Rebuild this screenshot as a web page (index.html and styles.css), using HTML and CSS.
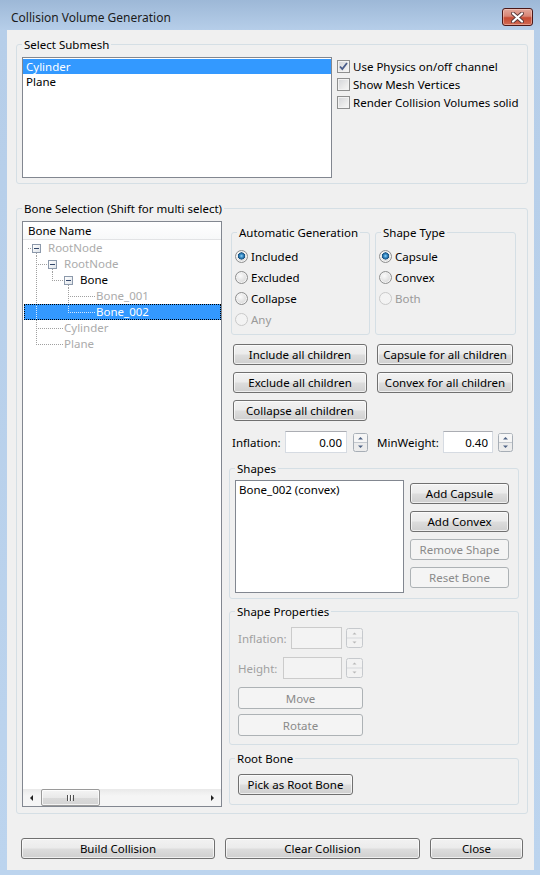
FILE: index.html
```html
<!DOCTYPE html>
<html lang="en">
<head>
  <meta charset="UTF-8">
  <title>Collision Volume Generation</title>
  <link rel="stylesheet" href="styles.css">
</head>
<body>
  <div class="window">
    <div class="titlebar">
      <span class="title">Collision Volume Generation</span>
      <button class="close-btn" aria-label="Close">
        <svg width="13" height="11" viewBox="0 0 13 11">
          <path d="M2 1.5 L11 9.5 M11 1.5 L2 9.5" stroke="#5a3a3a" stroke-width="4" stroke-linecap="round"/>
          <path d="M2 1.5 L11 9.5 M11 1.5 L2 9.5" stroke="#fff" stroke-width="2.2" stroke-linecap="round"/>
        </svg>
      </button>
    </div>

    <div class="client">
      <!-- submesh list + display options -->
      <fieldset class="group submesh">
        <legend>Select Submesh</legend>
        <div class="submesh-row">
          <div class="listbox submesh-list">
            <div class="item selected">Cylinder</div>
            <div class="item">Plane</div>
          </div>
          <div class="checks">
            <label class="check-row">
              <span class="checkbox">
                <svg width="11" height="11" viewBox="0 0 11 11"><path d="M2 5.5 L4.3 8 L9 2" fill="none" stroke="#4a5d8a" stroke-width="1.8"/></svg>
              </span>
              Use Physics on/off channel
            </label>
            <label class="check-row"><span class="checkbox"></span>Show Mesh Vertices</label>
            <label class="check-row"><span class="checkbox"></span>Render Collision Volumes solid</label>
          </div>
        </div>
      </fieldset>

      <fieldset class="group bones">
        <legend>Bone Selection (Shift for multi select)</legend>
        <div class="bones-row">

          <!-- bone tree -->
          <div class="tree">
            <div class="tree-header">Bone Name</div>
            <div class="tree-body">
              <div class="row">
                <span class="cell node"><span class="box"></span></span>RootNode
              </div>
              <div class="row">
                <span class="cell conn"></span>
                <span class="cell node"><span class="box"></span></span>RootNode
              </div>
              <div class="row active">
                <span class="cell v"></span>
                <span class="cell last"></span>
                <span class="cell node"><span class="box"></span></span>Bone
              </div>
              <div class="row">
                <span class="cell v"></span>
                <span class="cell"></span>
                <span class="cell conn"></span>
                <span class="cell leaf"></span>Bone_001
              </div>
              <div class="row selected">
                <span class="cell v"></span>
                <span class="cell"></span>
                <span class="cell last"></span>
                <span class="cell leaf"></span>Bone_002
              </div>
              <div class="row">
                <span class="cell conn"></span>
                <span class="cell leaf"></span>Cylinder
              </div>
              <div class="row">
                <span class="cell last"></span>
                <span class="cell leaf"></span>Plane
              </div>
            </div>
            <div class="hscroll">
              <span class="sb-btn"><span class="arr-l"></span></span>
              <span class="thumb"><span class="grip"></span></span>
              <span class="sb-track"></span>
              <span class="sb-btn"><span class="arr-r"></span></span>
            </div>
          </div>

          <!-- right side controls -->
          <div class="side">
            <div class="side-top">
              <fieldset class="group radio-group auto-gen">
                <legend>Automatic Generation</legend>
                <label class="radio-row"><span class="radio on"></span>Included</label>
                <label class="radio-row"><span class="radio"></span>Excluded</label>
                <label class="radio-row"><span class="radio"></span>Collapse</label>
                <label class="radio-row disabled"><span class="radio"></span>Any</label>
              </fieldset>
              <fieldset class="group radio-group shape-type">
                <legend>Shape Type</legend>
                <label class="radio-row"><span class="radio on"></span>Capsule</label>
                <label class="radio-row"><span class="radio"></span>Convex</label>
                <label class="radio-row disabled"><span class="radio"></span>Both</label>
              </fieldset>
            </div>

            <div class="btn-grid">
              <button class="btn">Include all children</button>
              <button class="btn">Capsule for all children</button>
              <button class="btn">Exclude all children</button>
              <button class="btn">Convex for all children</button>
              <button class="btn">Collapse all children</button>
            </div>

            <div class="spin-row">
              <span class="lbl lbl-infl">Inflation:</span>
              <input class="num num-infl" value="0.00">
              <svg class="spin" width="15" height="19" viewBox="0 0 15 19">
                <rect x="0.5" y="0.5" width="14" height="18" rx="2" fill="#ececec" stroke="#a7aeb6"/>
                <rect x="1" y="1" width="13" height="8" rx="1" fill="#f6f6f6"/>
                <line x1="1" y1="9.5" x2="14" y2="9.5" stroke="#c3c8ce"/>
                <path d="M7.5 4 L10 6.5 H5 Z" fill="#4d6183"/>
                <path d="M5 12.5 H10 L7.5 15 Z" fill="#4d6183"/>
              </svg>
              <span class="lbl lbl-minw">MinWeight:</span>
              <input class="num num-minw" value="0.40">
              <svg class="spin" width="15" height="19" viewBox="0 0 15 19">
                <rect x="0.5" y="0.5" width="14" height="18" rx="2" fill="#ececec" stroke="#a7aeb6"/>
                <rect x="1" y="1" width="13" height="8" rx="1" fill="#f6f6f6"/>
                <line x1="1" y1="9.5" x2="14" y2="9.5" stroke="#c3c8ce"/>
                <path d="M7.5 4 L10 6.5 H5 Z" fill="#4d6183"/>
                <path d="M5 12.5 H10 L7.5 15 Z" fill="#4d6183"/>
              </svg>
            </div>

            <fieldset class="group shapes">
              <legend>Shapes</legend>
              <div class="shapes-row">
                <div class="listbox shape-list">
                  <div class="item">Bone_002 (convex)</div>
                </div>
                <div class="shape-btns">
                  <button class="btn">Add Capsule</button>
                  <button class="btn">Add Convex</button>
                  <button class="btn" disabled>Remove Shape</button>
                  <button class="btn" disabled>Reset Bone</button>
                </div>
              </div>
            </fieldset>

            <fieldset class="group shape-props">
              <legend>Shape Properties</legend>
              <div class="props">
                <div class="prop-row">
                  <span class="lbl off">Inflation:</span>
                  <input class="num off infl-off" disabled>
                  <svg class="spin off-spin" width="17" height="20" viewBox="0 0 17 20">
                    <rect x="0.5" y="0.5" width="16" height="19" rx="2" fill="#f2f2f2" stroke="#c6c9cd"/>
                    <line x1="1" y1="10" x2="16" y2="10" stroke="#d6d8db"/>
                    <path d="M8.5 4.5 L10.5 6.5 H6.5 Z" fill="#b8b8b8"/>
                    <path d="M6.5 13.5 H10.5 L8.5 15.5 Z" fill="#b8b8b8"/>
                  </svg>
                </div>
                <div class="prop-row">
                  <span class="lbl off">Height:</span>
                  <input class="num off height-off" disabled>
                  <svg class="spin off-spin" width="17" height="20" viewBox="0 0 17 20">
                    <rect x="0.5" y="0.5" width="16" height="19" rx="2" fill="#f2f2f2" stroke="#c6c9cd"/>
                    <line x1="1" y1="10" x2="16" y2="10" stroke="#d6d8db"/>
                    <path d="M8.5 4.5 L10.5 6.5 H6.5 Z" fill="#b8b8b8"/>
                    <path d="M6.5 13.5 H10.5 L8.5 15.5 Z" fill="#b8b8b8"/>
                  </svg>
                </div>
                <button class="btn wide move-btn" disabled>Move</button>
                <button class="btn wide rotate-btn" disabled>Rotate</button>
              </div>
            </fieldset>

            <fieldset class="group root-bone">
              <legend>Root Bone</legend>
              <button class="btn pick-btn">Pick as Root Bone</button>
            </fieldset>
          </div>
        </div>
      </fieldset>

      <div class="footer">
        <button class="btn build-btn">Build Collision</button>
        <button class="btn clear-btn">Clear Collision</button>
        <button class="btn close-dlg">Close</button>
      </div>
    </div>
  </div>
</body>
</html>
```

FILE: styles.css
```css
* {
  box-sizing: border-box;
}

body {
  margin: 0;
  font-family: "Noto Sans", "DejaVu Sans", sans-serif;
  font-size: 11.5px;
  color: #000;
  background: #bcd4ee;
}

.window {
  width: 540px;
  height: 875px;
  display: flex;
  flex-direction: column;
  padding: 0 6px 5px 7px;
  background: linear-gradient(to bottom, #9db8d7 0, #b6cee9 30px, #bcd4ee 100%);
}

.titlebar {
  height: 30px;
  flex: none;
  display: flex;
  align-items: center;
  justify-content: space-between;
  padding: 4px 1px 0 4px;
}

.title {
  font-size: 12px;
  color: #1b1b1b;
}

.close-btn {
  width: 31px;
  height: 18px;
  padding: 0;
  display: flex;
  align-items: center;
  justify-content: center;
  border: 1px solid #4b1818;
  border-radius: 3px;
  background: linear-gradient(to bottom, #e2a89c 0%, #d88575 45%, #c64a33 55%, #d06a52 100%);
  box-shadow: inset 0 0 0 1px rgba(255, 220, 210, 0.45);
}

.client {
  flex: 1;
  display: flex;
  flex-direction: column;
  background: #f0f0f0;
  padding: 7px 6px 0 9px;
}

/* group boxes */
.group {
  margin: 0;
  min-width: 0;
  border: 1px solid #d5dfe5;
  border-radius: 3px;
  padding: 5px;
}

.group legend {
  padding: 0 2px;
  line-height: 15px;
  height: 15px;
}

.submesh-row {
  display: flex;
  gap: 5px;
}

.listbox {
  background: #fff;
  border: 1px solid #828790;
  padding-top: 1px;
}

.submesh-list {
  width: 310px;
  height: 121px;
}

.item {
  height: 15px;
  line-height: 15px;
  padding-left: 3px;
  white-space: nowrap;
}

.item.selected {
  background: #3399ff;
  color: #fff;
}

.checks {
  display: flex;
  flex-direction: column;
}

.check-row {
  height: 18px;
  display: flex;
  align-items: center;
  gap: 3px;
  white-space: nowrap;
}

.checkbox {
  width: 13px;
  height: 13px;
  flex: none;
  border: 1px solid #8e8f8f;
  background: linear-gradient(135deg, #d2d4d8 0%, #eaeaea 60%, #f7f7f7 100%);
  box-shadow: inset 0 0 0 1px #f2f2f2;
  display: flex;
  align-items: center;
  justify-content: center;
}

.bones {
  margin-top: 17px;
  padding: 5px 5px 6px 5px;
}

.bones-row {
  display: flex;
  gap: 7px;
  align-items: flex-start;
}

/* tree view */
.tree {
  width: 200px;
  height: 586px;
  flex: none;
  border: 1px solid #828790;
  background: #fff;
  display: flex;
  flex-direction: column;
  --line: #a0a0a0;
}

.tree-header {
  height: 18px;
  line-height: 17px;
  padding-left: 5px;
  border-bottom: 1px solid #e2e3e5;
  background: linear-gradient(to bottom, #ffffff, #f7f8f9);
}

.tree-body {
  flex: 1;
}

.row {
  height: 16px;
  line-height: 16px;
  display: flex;
  margin-left: 1px;
  padding-left: 4px;
  white-space: nowrap;
  color: #ababab;
}

.row.active {
  color: #000;
}

.row.selected {
  background: #3399ff;
  color: #fff;
  outline: 1px dotted #000;
  outline-offset: -1px;
  --line: #d4e8ff;
}

.cell {
  width: 16px;
  height: 16px;
  flex: none;
  background-repeat: no-repeat;
}

.cell.v {
  background-image: repeating-linear-gradient(to bottom, var(--line) 0 1px, transparent 1px 2px);
  background-position: 8px 0;
  background-size: 1px 16px;
}

.cell.conn {
  background-image:
    repeating-linear-gradient(to bottom, var(--line) 0 1px, transparent 1px 2px),
    repeating-linear-gradient(to right, var(--line) 0 1px, transparent 1px 2px);
  background-position: 8px 0, 8px 8px;
  background-size: 1px 16px, 8px 1px;
}

.cell.last {
  background-image:
    repeating-linear-gradient(to bottom, var(--line) 0 1px, transparent 1px 2px),
    repeating-linear-gradient(to right, var(--line) 0 1px, transparent 1px 2px);
  background-position: 8px 0, 8px 8px;
  background-size: 1px 9px, 8px 1px;
}

.cell.node {
  width: 20px;
  padding: 4px 0 0 4px;
  background-image:
    repeating-linear-gradient(to right, var(--line) 0 1px, transparent 1px 2px),
    repeating-linear-gradient(to bottom, var(--line) 0 1px, transparent 1px 2px);
  background-position: 0 8px, 8px 13px;
  background-size: 4px 1px, 1px 3px;
}

.cell.leaf {
  width: 20px;
  background-image: repeating-linear-gradient(to right, var(--line) 0 1px, transparent 1px 2px);
  background-position: 0 8px;
  background-size: 20px 1px;
}

.box {
  display: block;
  width: 9px;
  height: 9px;
  border: 1px solid #8c99ab;
  background:
    linear-gradient(#33476a, #33476a) 1px 3px / 5px 1px no-repeat,
    linear-gradient(135deg, #ffffff, #dfe4ea);
}

.hscroll {
  height: 17px;
  flex: none;
  display: flex;
  background: linear-gradient(to bottom, #e9e9e9, #f5f5f5 40%, #f5f5f5);
}

.sb-btn {
  width: 17px;
  flex: none;
  display: flex;
  align-items: center;
  justify-content: center;
}

.arr-l {
  border-top: 3px solid transparent;
  border-bottom: 3px solid transparent;
  border-right: 3px solid #222;
}

.arr-r {
  border-top: 3px solid transparent;
  border-bottom: 3px solid transparent;
  border-left: 3px solid #222;
}

.thumb {
  width: 59px;
  margin: 0 0 0 1px;
  border: 1px solid #9a9a9a;
  border-radius: 2px;
  background: linear-gradient(to bottom, #f4f4f4 0%, #e9e9e9 50%, #dadada 51%, #d4d4d4 100%);
  box-shadow: inset 0 0 0 1px rgba(255, 255, 255, 0.7);
  display: flex;
  align-items: center;
  justify-content: center;
}

.grip {
  width: 7px;
  height: 6px;
  background: repeating-linear-gradient(to right, #505050 0 1px, #fafafa 1px 2px, transparent 2px 3px);
}

.sb-track {
  flex: 1;
}

/* right side */
.side {
  width: 290px;
  flex: none;
  display: flex;
  flex-direction: column;
}

.side-top {
  display: flex;
  gap: 5px;
  margin: 4px 0 0 2px;
}

.radio-group {
  padding: 6px 3px 4px 3px;
}

.radio-group legend {
  margin-left: 2px;
}

.auto-gen {
  width: 139px;
}

.shape-type {
  width: 141px;
}

.radio-row {
  height: 21px;
  display: flex;
  align-items: center;
  gap: 3px;
  white-space: nowrap;
}

.radio-row.disabled {
  color: #9a9a9a;
}

.radio {
  width: 13px;
  height: 13px;
  flex: none;
  border-radius: 50%;
  border: 1px solid #8e8f8f;
  background: radial-gradient(circle at 40% 35%, #fbfbfb 0, #e6e6e6 45%, #cfcfcf 100%);
  box-shadow: inset 0 0 0 1px #f4f4f4;
}

.radio.on {
  background:
    radial-gradient(circle at 50% 45%, #9ad8f6 0, #3e93cf 1.5px, #18517f 3.4px, transparent 3.8px),
    radial-gradient(circle at 40% 35%, #fbfbfb 0, #e6e6e6 45%, #cfcfcf 100%);
}

.radio-row.disabled .radio {
  border-color: #c9c9c9;
  background: #f3f3f3;
  box-shadow: none;
}

/* push buttons */
.btn {
  font: inherit;
  color: #000;
  height: 21px;
  padding: 0;
  border: 1px solid #707070;
  border-radius: 3px;
  background: linear-gradient(to bottom, #f2f2f2 0%, #ebebeb 48%, #dddddd 52%, #cfcfcf 100%);
  box-shadow: inset 0 0 0 1px rgba(255, 255, 255, 0.65);
  white-space: nowrap;
}

.btn:disabled {
  border-color: #adb2b5;
  background: #f4f4f4;
  box-shadow: none;
  color: #8a8a8a;
}

.btn-grid {
  display: grid;
  grid-template-columns: 134px 136px;
  grid-auto-rows: 21px;
  column-gap: 10px;
  row-gap: 7px;
  margin: 9px 0 0 4px;
}

.spin-row {
  height: 22px;
  display: flex;
  align-items: center;
  margin: 10px 0 0 3px;
}

.lbl {
  white-space: nowrap;
}

.lbl-infl {
  width: 53px;
}

.lbl-minw {
  width: 66px;
  margin-left: 9px;
}

.num {
  font: inherit;
  height: 22px;
  padding: 0 4px 0 0;
  text-align: right;
  background: #fff;
  border: 1px solid #d6dbe2;
  border-top-color: #abadb3;
  color: #000;
}

.num-infl {
  width: 62px;
}

.num-minw {
  width: 50px;
}

.spin {
  display: block;
  flex: none;
  margin-left: 6px;
}

.num-minw + .spin {
  margin-left: 5px;
}

.shapes {
  margin-top: 8px;
  padding: 4px 5px 5px 5px;
}

.shapes-row {
  display: flex;
  gap: 6px;
}

.shape-list {
  width: 169px;
  height: 113px;
}

.shape-btns {
  display: flex;
  flex-direction: column;
  gap: 7px;
  margin-top: 3px;
}

.shape-btns .btn {
  width: 99px;
}

.shape-props {
  margin-top: 5px;
  padding: 8px 5px 8px 5px;
}

.props {
  width: 125px;
  margin-left: 3px;
  display: flex;
  flex-direction: column;
}

.prop-row {
  height: 22px;
  display: flex;
  align-items: center;
}

.prop-row + .prop-row {
  margin-top: 8px;
}

.lbl.off {
  color: #a0a0a0;
}

.num.off {
  margin-left: auto;
  background: #f3f3f3;
  border: 1px solid #cbcbcb;
}

.infl-off {
  width: 51px;
}

.height-off {
  width: 59px;
}

.off-spin {
  margin-left: 4px;
}

.btn.wide {
  width: 125px;
  height: 22px;
}

.move-btn {
  margin-top: 8px;
}

.rotate-btn {
  margin-top: 5px;
}

.root-bone {
  margin-top: 6px;
  padding: 8px 5px 9px 5px;
}

.pick-btn {
  width: 115px;
  margin-left: 3px;
}

.footer {
  display: flex;
  gap: 10px;
  margin-top: 24px;
  padding: 0 5px;
}

.build-btn {
  width: 194px;
}

.clear-btn {
  width: 195px;
}

.close-dlg {
  width: 93px;
}
```
